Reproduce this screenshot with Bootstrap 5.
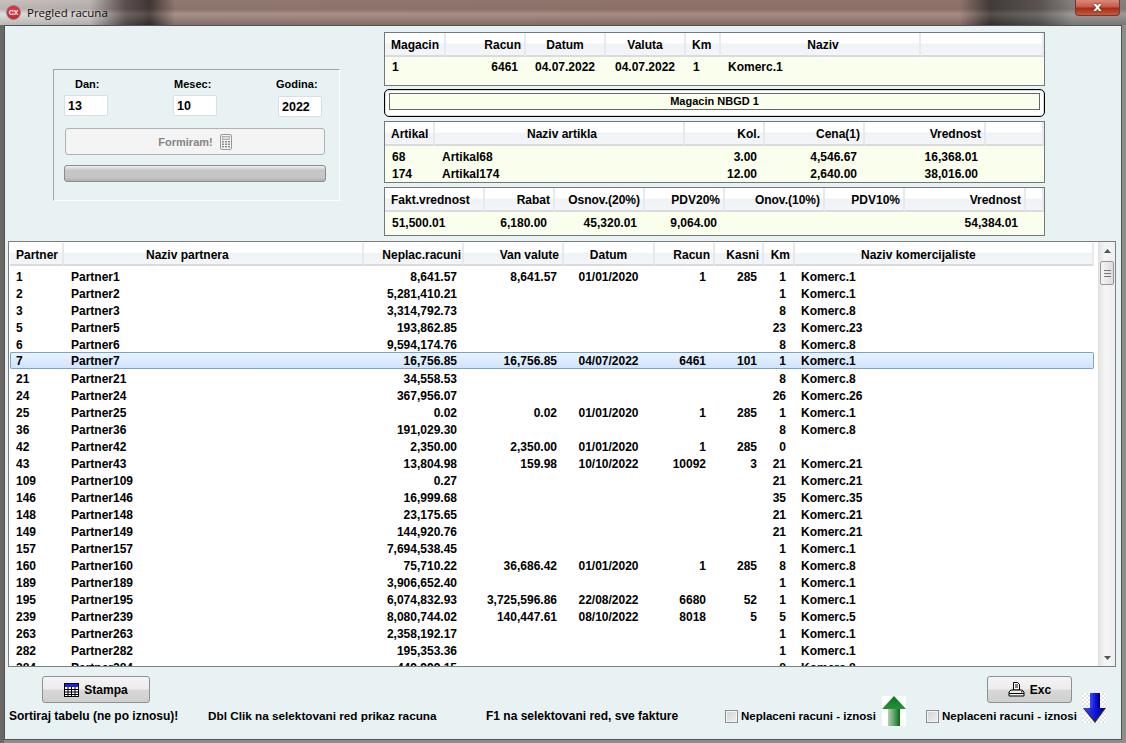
<!DOCTYPE html>
<html lang="sr">
<head>
<meta charset="utf-8">
<title>Pregled racuna</title>
<link rel="stylesheet" href="https://cdn.jsdelivr.net/npm/bootstrap@5.3.0/dist/css/bootstrap.min.css">
<style>
html,body{height:743px;overflow:hidden}
body{margin:0;background:linear-gradient(90deg,#6a6765 0,#6a6765 4px,#8f8d8b 4px,#8f8d8b 100%);font:bold 11px/14px "Liberation Sans",Arial,sans-serif;color:#000}
.win-app{width:1126px;height:743px}
.win-title{height:25px;padding-left:6px;gap:6px;font:11.5px/24px "Open Sans","Liberation Sans",sans-serif;color:#111;
 background:linear-gradient(180deg,rgba(90,70,65,.15) 0,rgba(90,70,65,.25) 9px,rgba(255,255,255,.12) 14px,rgba(0,0,0,.15) 25px),
 linear-gradient(90deg,#dcd8d6 0,#cfcac8 90px,#5b5250 125px,#3a3331 150px,#9b817a 175px,#9b7f77 400px,#9a7c73 700px,#9a7c73 960px,#3c3735 990px,#5a5654 1040px,#8d8b8a 1072px,#8d8b8a 100%)}
.win-close{margin-left:auto;margin-right:6px;width:45px;height:16px;margin-top:-9px;border:1px solid #6b3a33;border-top:0;border-radius:0 0 4px 4px;background:linear-gradient(180deg,#d9897c 0,#c45c48 45%,#a82c12 55%,#c9593f 100%);color:#fff;font:bold 13px/14px "DejaVu Sans",sans-serif;text-align:center;text-shadow:0 0 2px #222}
.win-client{width:1118px;height:715px;margin-left:4px;background:#e8f2f3;border:1px solid #4f5355}
.left-col{width:379px;flex:none}
.date-panel{width:287px;height:132px;margin:43px 0 0 48px;padding:7px 0 0 10px;border:1px solid;border-color:#a0a4a6 #fff #fff #a0a4a6}
.date-grid{display:grid;grid-template-columns:109px 105px 44px}
.dlbl-a{padding-left:11px}.dlbl-b{padding-left:1px}.dlbl-c{margin-left:-2px;white-space:nowrap}
.date-inp{width:44px;height:21px;margin-top:4px;padding:0 0 0 3px;border:1px solid #d7e0e6;border-radius:1px;font:inherit;font-size:12.5px;color:#000;background:#fff}
.date-inp.low{margin-top:5px}
.form-btn{display:flex;align-items:center;justify-content:center;gap:7px;width:260px;height:27px;margin:11px 0 0 1px;padding:0;border:1px solid #adb2b5;border-radius:3px;background:#f4f4f4;color:#858585;font:inherit;opacity:1}
.form-btn:disabled{background:#f4f4f4;color:#858585;border-color:#adb2b5;opacity:1}
.form-prog{width:262px;height:17px;margin-top:10px;border:1px solid #8a8d8e;border-radius:3px;background:linear-gradient(180deg,#eee 0,#c6c6c6 30%,#c6c6c6 75%,#b0b0b0 100%)}
.right-col{width:661px;margin-top:6px}
.grid-box{width:661px;border:1px solid #70797d;box-shadow:inset 0 1px 0 #c8ced0;background:#fafeed;overflow:hidden}
.box-a{height:54px;margin-bottom:3px}
.box-c{height:62px;margin:4px 0}
.box-d{height:49px}
.mag-box{height:28px;padding:3px 4px 0 4px;border:1px solid #000;border-radius:5px;background:#fff;box-shadow:inset 0 0 0 1px #d8dcdc}
.mag-inner{height:17px;border:1px solid #666;background:#fafeed;text-align:center;line-height:15px}
.gt{table-layout:fixed;margin:0;border-collapse:separate;border-spacing:0;--bs-table-bg:transparent;--bs-table-border-color:transparent;color:#000}
.gt>:not(caption)>*>*{padding:0 8px 0 7px;border:0;background:transparent;color:#000;box-shadow:none;white-space:nowrap;overflow:hidden;font-size:12px;line-height:14px}
.gt thead th{height:24px;font-weight:bold;vertical-align:middle;text-align:center;padding:2px 5px 0;background:linear-gradient(180deg,#fff 0,#fff 45%,#f0f3f6 50%,#f3f5f8 100%);border-right:2px solid #e6e9ed;border-bottom:2px solid #d8dadb}
.gt thead th.ta-r{text-align:right;padding-right:3px;padding-left:0}.gt thead th.ta-l{text-align:left;padding-left:6px}
.gt thead th.hd-shift{padding-left:11px}
.gt thead th.hd-part{text-align:left;padding-left:82px}
.gt thead th.hd-kom{text-align:left;padding-left:66px}
.gt thead th.ta-r.hd-nep{padding-right:1px}
.gt td{height:17px;vertical-align:bottom}
.gt td.ta-r{text-align:right}.gt>tbody>tr>td.ta-c{text-align:center;padding-left:0;padding-right:2px}
.gt-small tbody tr:first-child td{height:18px}
.ta-ca.gt-small tbody tr:first-child td{height:17px}
.ta-ca>colgroup>col:nth-child(1){width:61px}.ta-ca>colgroup>col:nth-child(2),.ta-ca>colgroup>col:nth-child(3),.ta-ca>colgroup>col:nth-child(4){width:80px}.ta-ca>colgroup>col:nth-child(5){width:35px}.ta-ca>colgroup>col:nth-child(6){width:200px}
.ta-cc>colgroup>col:nth-child(1){width:50px}.ta-cc>colgroup>col:nth-child(2){width:250px}.ta-cc>colgroup>col:nth-child(3){width:80px}.ta-cc>colgroup>col:nth-child(4){width:100px}.ta-cc>colgroup>col:nth-child(5){width:121px}
.ta-cd>colgroup>col:nth-child(1){width:100px}.ta-cd>colgroup>col:nth-child(2){width:70px}.ta-cd>colgroup>col:nth-child(3){width:90px}.ta-cd>colgroup>col:nth-child(4){width:80px}.ta-cd>colgroup>col:nth-child(5){width:100px}.ta-cd>colgroup>col:nth-child(6){width:80px}.ta-cd>colgroup>col:nth-child(7){width:121px}
.list-box{width:1108px;height:426px;margin:5px 0 0 3px;border:1px solid #7b7f82;background:#fff;overflow:hidden}
.list-pane{width:1089px;height:424px;overflow:hidden;padding-left:1px;flex:none}
.list-pane .gt{width:1084px;margin-top:1px}
.ta-main>colgroup>col:nth-child(1){width:54px}.ta-main>colgroup>col:nth-child(2){width:300px}.ta-main>colgroup>col:nth-child(3){width:100px}.ta-main>colgroup>col:nth-child(4){width:100px}.ta-main>colgroup>col:nth-child(5){width:91px}.ta-main>colgroup>col:nth-child(6){width:60px}.ta-main>colgroup>col:nth-child(7){width:49px}.ta-main>colgroup>col:nth-child(8){width:31px}.ta-main>colgroup>col:nth-child(9){width:299px}
.ta-main thead th{height:23px}
.gt.ta-main>tbody>tr>td{padding-right:7px}
.gt.ta-main>tbody>tr>td:nth-child(6),.gt.ta-main>tbody>tr>td:nth-child(8){padding-right:9px}
.gt.ta-main>tbody>tr>td:nth-child(9){padding-left:6px}
.gt.ta-main>tbody>tr>td:nth-child(5){padding-right:2px}
.gt.ta-main>tbody>tr>td:first-child{padding-left:6px}
.ta-main tbody tr:first-child td{height:18px}
.ta-main tr.sel-row>td{background:linear-gradient(180deg,#e9f3fe 0,#cfe4fc 100%);border-top:1px solid #7da2ce;border-bottom:1px solid #7da2ce;height:17px;vertical-align:middle}
.gt.ta-main>tbody>tr.sel-row>td{padding-top:0;padding-bottom:0}
.gt.ta-main>tbody>tr.sel-row>td:first-child{border-left:1px solid #7da2ce;border-radius:2px 0 0 2px;padding-left:5px}
.ta-main tr.sel-row>td:last-child{border-right:1px solid #7da2ce;border-radius:0 2px 2px 0}
.scroll-bar{width:17px;height:424px;flex:none;background:linear-gradient(90deg,#e6e6e6,#f5f5f5 40%,#eee);border-left:1px solid #e0e0e0}
.scroll-up,.scroll-down{height:17px;line-height:17px}
.scroll-thumb{height:24px;margin:2px 1px 0;border:1px solid #979797;border-radius:2px;background:linear-gradient(90deg,#f5f5f5,#dcdcdc)}
.bar-top{height:26px;margin-top:9px;padding:0 49px 0 37px}
.tool-btn{display:flex;align-items:center;justify-content:center;gap:5px;height:27px;padding:0;border:1px solid #8e9193;border-radius:3px;background:linear-gradient(180deg,#f4f4f4 0,#ececec 48%,#d8d8d8 52%,#cfcfcf 100%);font:bold 12px/14px "Liberation Sans",sans-serif;color:#000}
.tool-btn:hover{background:#eee;color:#000}
.btn-stampa{width:108px}.btn-exc{width:85px}
.bar-low{display:grid;grid-template-columns:199px 278px 239px 157px 44px 156px 25px;align-items:start;margin-top:-9px;padding-left:4px;height:33px;font-size:12px}
.bar-txt{margin-top:16px;white-space:nowrap}
.bar-mid{font-size:11.75px}
.chk-wrap{display:flex;gap:3px;align-items:center;margin:16px 0 0;padding:0;min-height:0;white-space:nowrap;line-height:14px;font-size:11.5px}
.chk-wrap .form-check-input{flex:none;float:none;margin:1px 0 0;width:13px;height:13px;border:1px solid #8e8f8f;border-radius:0;background:linear-gradient(135deg,#d2d2d2,#f0f0f0);box-shadow:inset 0 0 0 1px #f4f4f4}
.arr-up{margin-top:3px}
</style>
</head>
<body>
<div class="win-app d-flex flex-column">
  <div class="win-title d-flex align-items-center">
    <svg width="15" height="15" viewBox="0 0 15 15"><defs><radialGradient id="rg" cx=".5" cy=".4" r=".6"><stop offset="0" stop-color="#f0404a"/><stop offset="1" stop-color="#c5202c"/></radialGradient></defs><circle cx="7.5" cy="7.5" r="7" fill="url(#rg)" stroke="#8d8d8d"/><text x="7.5" y="10" font-family="Liberation Sans" font-size="7" font-weight="bold" fill="#fff" text-anchor="middle">CX</text></svg>
    <span>Pregled racuna</span>
    <div class="win-close">x</div>
  </div>
  <div class="win-client">
    <div class="d-flex">
      <div class="left-col">
        <div class="date-panel">
          <div class="date-grid">
            <div><div class="dlbl-a">Dan:</div><input class="form-control date-inp" value="13"></div>
            <div><div class="dlbl-b">Mesec:</div><input class="form-control date-inp" value="10"></div>
            <div><div class="dlbl-c">Godina:</div><input class="form-control date-inp low" value="2022"></div>
          </div>
          <button class="btn form-btn" disabled>Formiram!
            <svg width="12" height="16" viewBox="0 0 12 16"><rect x=".5" y=".5" width="11" height="15" rx="1.5" fill="#f4f4f4" stroke="#9a9a9a"/><rect x="2.5" y="2.5" width="7" height="3" fill="#ddd" stroke="#9a9a9a" stroke-width=".7"/><g fill="#8d8d8d"><rect x="2" y="7" width="2" height="1.5"/><rect x="5" y="7" width="2" height="1.5"/><rect x="8" y="7" width="2" height="1.5"/><rect x="2" y="9.5" width="2" height="1.5"/><rect x="5" y="9.5" width="2" height="1.5"/><rect x="8" y="9.5" width="2" height="1.5"/><rect x="2" y="12" width="2" height="1.5"/><rect x="5" y="12" width="2" height="1.5"/><rect x="8" y="12" width="2" height="1.5"/></g></svg>
          </button>
          <div class="progress form-prog"></div>
        </div>
      </div>
      <div class="right-col">
        <div class="grid-box box-a">
          <table class="table gt gt-small ta-ca"><colgroup><col><col><col><col><col><col><col></colgroup>
            <thead><tr><th class="ta-l">Magacin</th><th class="ta-r">Racun</th><th>Datum</th><th>Valuta</th><th class="ta-l">Km</th><th class="hd-shift">Naziv</th><th></th></tr></thead>
            <tbody><tr><td>1</td><td class="ta-r">6461</td><td class="ta-c">04.07.2022</td><td class="ta-c">04.07.2022</td><td>1</td><td>Komerc.1</td><td></td></tr></tbody>
          </table>
        </div>
        <div class="mag-box"><div class="mag-inner">Magacin NBGD 1</div></div>
        <div class="grid-box box-c">
          <table class="table gt gt-small ta-cc"><colgroup><col><col><col><col><col><col></colgroup>
            <thead><tr><th class="ta-l">Artikal</th><th class="hd-shift">Naziv artikla</th><th class="ta-r">Kol.</th><th class="ta-r">Cena(1)</th><th class="ta-r">Vrednost</th><th></th></tr></thead>
            <tbody>
              <tr><td>68</td><td>Artikal68</td><td class="ta-r">3.00</td><td class="ta-r">4,546.67</td><td class="ta-r">16,368.01</td><td></td></tr>
              <tr><td>174</td><td>Artikal174</td><td class="ta-r">12.00</td><td class="ta-r">2,640.00</td><td class="ta-r">38,016.00</td><td></td></tr>
            </tbody>
          </table>
        </div>
        <div class="grid-box box-d">
          <table class="table gt gt-small ta-cd"><colgroup><col><col><col><col><col><col><col><col></colgroup>
            <thead><tr><th class="ta-l">Fakt.vrednost</th><th class="ta-r">Rabat</th><th class="ta-r">Osnov.(20%)</th><th class="ta-r">PDV20%</th><th class="ta-r">Onov.(10%)</th><th class="ta-r">PDV10%</th><th class="ta-r">Vrednost</th><th></th></tr></thead>
            <tbody><tr><td>51,500.01</td><td class="ta-r">6,180.00</td><td class="ta-r">45,320.01</td><td class="ta-r">9,064.00</td><td></td><td></td><td class="ta-r">54,384.01</td><td></td></tr></tbody>
          </table>
        </div>
      </div>
    </div>
    <div class="list-box d-flex">
      <div class="list-pane">
        <table class="table gt ta-main"><colgroup><col><col><col><col><col><col><col><col><col></colgroup>
          <thead><tr><th class="ta-l">Partner</th><th class="hd-part">Naziv partnera</th><th class="ta-r hd-nep">Neplac.racuni</th><th class="ta-r">Van valute</th><th>Datum</th><th class="ta-r">Racun</th><th class="ta-r">Kasni</th><th class="ta-r">Km</th><th class="hd-kom">Naziv komercijaliste</th></tr></thead>
          <tbody>
<tr><td>1</td><td>Partner1</td><td class="ta-r">8,641.57</td><td class="ta-r">8,641.57</td><td class="ta-c">01/01/2020</td><td class="ta-r">1</td><td class="ta-r">285</td><td class="ta-r">1</td><td>Komerc.1</td></tr>
<tr><td>2</td><td>Partner2</td><td class="ta-r">5,281,410.21</td><td></td><td></td><td></td><td></td><td class="ta-r">1</td><td>Komerc.1</td></tr>
<tr><td>3</td><td>Partner3</td><td class="ta-r">3,314,792.73</td><td></td><td></td><td></td><td></td><td class="ta-r">8</td><td>Komerc.8</td></tr>
<tr><td>5</td><td>Partner5</td><td class="ta-r">193,862.85</td><td></td><td></td><td></td><td></td><td class="ta-r">23</td><td>Komerc.23</td></tr>
<tr><td>6</td><td>Partner6</td><td class="ta-r">9,594,174.76</td><td></td><td></td><td></td><td></td><td class="ta-r">8</td><td>Komerc.8</td></tr>
<tr class="sel-row"><td>7</td><td>Partner7</td><td class="ta-r">16,756.85</td><td class="ta-r">16,756.85</td><td class="ta-c">04/07/2022</td><td class="ta-r">6461</td><td class="ta-r">101</td><td class="ta-r">1</td><td>Komerc.1</td></tr>
<tr><td>21</td><td>Partner21</td><td class="ta-r">34,558.53</td><td></td><td></td><td></td><td></td><td class="ta-r">8</td><td>Komerc.8</td></tr>
<tr><td>24</td><td>Partner24</td><td class="ta-r">367,956.07</td><td></td><td></td><td></td><td></td><td class="ta-r">26</td><td>Komerc.26</td></tr>
<tr><td>25</td><td>Partner25</td><td class="ta-r">0.02</td><td class="ta-r">0.02</td><td class="ta-c">01/01/2020</td><td class="ta-r">1</td><td class="ta-r">285</td><td class="ta-r">1</td><td>Komerc.1</td></tr>
<tr><td>36</td><td>Partner36</td><td class="ta-r">191,029.30</td><td></td><td></td><td></td><td></td><td class="ta-r">8</td><td>Komerc.8</td></tr>
<tr><td>42</td><td>Partner42</td><td class="ta-r">2,350.00</td><td class="ta-r">2,350.00</td><td class="ta-c">01/01/2020</td><td class="ta-r">1</td><td class="ta-r">285</td><td class="ta-r">0</td><td></td></tr>
<tr><td>43</td><td>Partner43</td><td class="ta-r">13,804.98</td><td class="ta-r">159.98</td><td class="ta-c">10/10/2022</td><td class="ta-r">10092</td><td class="ta-r">3</td><td class="ta-r">21</td><td>Komerc.21</td></tr>
<tr><td>109</td><td>Partner109</td><td class="ta-r">0.27</td><td></td><td></td><td></td><td></td><td class="ta-r">21</td><td>Komerc.21</td></tr>
<tr><td>146</td><td>Partner146</td><td class="ta-r">16,999.68</td><td></td><td></td><td></td><td></td><td class="ta-r">35</td><td>Komerc.35</td></tr>
<tr><td>148</td><td>Partner148</td><td class="ta-r">23,175.65</td><td></td><td></td><td></td><td></td><td class="ta-r">21</td><td>Komerc.21</td></tr>
<tr><td>149</td><td>Partner149</td><td class="ta-r">144,920.76</td><td></td><td></td><td></td><td></td><td class="ta-r">21</td><td>Komerc.21</td></tr>
<tr><td>157</td><td>Partner157</td><td class="ta-r">7,694,538.45</td><td></td><td></td><td></td><td></td><td class="ta-r">1</td><td>Komerc.1</td></tr>
<tr><td>160</td><td>Partner160</td><td class="ta-r">75,710.22</td><td class="ta-r">36,686.42</td><td class="ta-c">01/01/2020</td><td class="ta-r">1</td><td class="ta-r">285</td><td class="ta-r">8</td><td>Komerc.8</td></tr>
<tr><td>189</td><td>Partner189</td><td class="ta-r">3,906,652.40</td><td></td><td></td><td></td><td></td><td class="ta-r">1</td><td>Komerc.1</td></tr>
<tr><td>195</td><td>Partner195</td><td class="ta-r">6,074,832.93</td><td class="ta-r">3,725,596.86</td><td class="ta-c">22/08/2022</td><td class="ta-r">6680</td><td class="ta-r">52</td><td class="ta-r">1</td><td>Komerc.1</td></tr>
<tr><td>239</td><td>Partner239</td><td class="ta-r">8,080,744.02</td><td class="ta-r">140,447.61</td><td class="ta-c">08/10/2022</td><td class="ta-r">8018</td><td class="ta-r">5</td><td class="ta-r">5</td><td>Komerc.5</td></tr>
<tr><td>263</td><td>Partner263</td><td class="ta-r">2,358,192.17</td><td></td><td></td><td></td><td></td><td class="ta-r">1</td><td>Komerc.1</td></tr>
<tr><td>282</td><td>Partner282</td><td class="ta-r">195,353.36</td><td></td><td></td><td></td><td></td><td class="ta-r">1</td><td>Komerc.1</td></tr>
<tr><td>284</td><td>Partner284</td><td class="ta-r">449,999.15</td><td></td><td></td><td></td><td></td><td class="ta-r">8</td><td>Komerc.8</td></tr>
          </tbody>
        </table>
      </div>
      <div class="scroll-bar d-flex flex-column">
        <div class="scroll-up d-flex justify-content-center align-items-center"><svg width="7" height="4" viewBox="0 0 7 4"><path d="M0 4 3.5 0 7 4z" fill="#555"/></svg></div>
        <div class="scroll-thumb d-flex flex-column justify-content-center align-items-center gap-0"><svg width="7" height="7" viewBox="0 0 7 7"><path d="M0 .5h7M0 3.5h7M0 6.5h7" stroke="#777"/></svg></div>
        <div class="scroll-down mt-auto d-flex justify-content-center align-items-center"><svg width="7" height="4" viewBox="0 0 7 4"><path d="M0 0 3.5 4 7 0z" fill="#555"/></svg></div>
      </div>
    </div>
    <div class="bar-top d-flex justify-content-between">
      <button class="btn tool-btn btn-stampa"><svg width="15" height="14" viewBox="0 0 15 14"><rect x=".5" y=".5" width="14" height="13" fill="#fff" stroke="#000"/><rect x="1" y="1" width="13" height="3" fill="#1a22e0"/><path d="M1 6.5h13M1 9h13M1 11.5h13M4 4v9M7.500 4v9M11 4v9" stroke="#000"/></svg>Stampa</button>
      <button class="btn tool-btn btn-exc"><svg width="17" height="15" viewBox="0 0 17 15"><path d="M5.500.5h4l2 2v5.500h-6z" fill="#fff" stroke="#000"/><path d="M7 3h3M7 5h3" stroke="#000"/><path d="M3 8h11l2 2v4H1v-4z" fill="#eee" stroke="#000"/><path d="M1 11.500h15" stroke="#000"/><rect x="13" y="9" width="1.500" height="1.500" fill="#d11"/></svg>Exc</button>
    </div>
    <div class="bar-low">
      <div class="bar-txt">Sortiraj tabelu (ne po iznosu)!</div>
      <div class="bar-txt bar-mid">Dbl Clik na selektovani red prikaz racuna</div>
      <div class="bar-txt">F1 na selektovani red, sve fakture</div>
      <label class="form-check chk-wrap"><input class="form-check-input" type="checkbox">Neplaceni racuni - iznosi</label>
      <svg class="arr-up" width="24" height="30" viewBox="0 0 24 30"><defs><linearGradient id="gu" x1="0" x2="1" y1="0" y2="0"><stop offset="0" stop-color="#b5cdb8"/><stop offset=".5" stop-color="#5ea566"/><stop offset="1" stop-color="#066a14"/></linearGradient><linearGradient id="gh" x1="0" x2="0" y1="0" y2="1"><stop offset="0" stop-color="#04791a"/><stop offset="1" stop-color="#27913a"/></linearGradient></defs><rect width="24" height="30" fill="#fff"/><rect x="6" y="11" width="12" height="19" fill="url(#gu)"/><path d="M12 0 24 13H0z" fill="url(#gh)"/></svg>
      <label class="form-check chk-wrap"><input class="form-check-input" type="checkbox">Neplaceni racuni - iznosi</label>
      <svg width="25" height="30" viewBox="0 0 25 30"><defs><pattern id="chk" width="4" height="4" patternUnits="userSpaceOnUse"><rect width="4" height="4" fill="#fff"/><rect width="2" height="2" fill="#e4e4e4"/><rect x="2" y="2" width="2" height="2" fill="#e4e4e4"/></pattern><linearGradient id="gb" x1="0" x2="1" y1="0" y2="0"><stop offset="0" stop-color="#3a4cf0"/><stop offset=".6" stop-color="#0a10d8"/><stop offset="1" stop-color="#02026a"/></linearGradient></defs><rect width="25" height="30" fill="url(#chk)"/><rect x="8" y="0" width="10" height="18" fill="url(#gb)"/><path d="M1 15H24L13 30z" fill="#03033a" opacity=".85"/><path d="M2 15H23L13 27z" fill="url(#gb)"/></svg>
    </div>
  </div>
</div>
</body>
</html>
